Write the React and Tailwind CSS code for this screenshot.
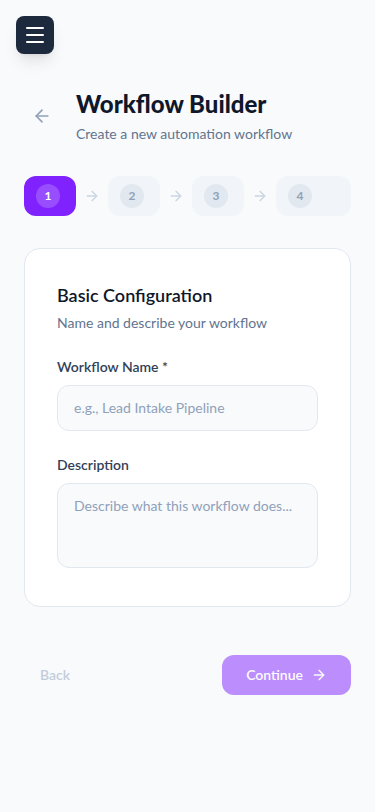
import React from 'react';
import { Menu, ArrowLeft, ArrowRight } from 'lucide-react';

const steps = [1, 2, 3, 4];

const App = () => {
  return (
    <div className="min-h-screen bg-slate-50 font-['Lato',sans-serif]">
      {/* menu toggle */}
      <button className="fixed top-4 left-4 z-10 flex h-[38px] w-[38px] items-center justify-center rounded-lg bg-slate-800 text-white shadow-lg">
        <Menu className="h-6 w-6" strokeWidth={2} />
      </button>

      <div className="px-6 pt-[88px] pb-12">
        {/* header */}
        <div className="flex items-center gap-4">
          <button className="p-2 text-slate-400">
            <ArrowLeft className="h-5 w-5" />
          </button>
          <div>
            <h1 className="text-2xl font-black leading-8 text-slate-900">Workflow Builder</h1>
            <p className="mt-1 text-sm text-slate-500">Create a new automation workflow</p>
          </div>
        </div>

        {/* steps */}
        <div className="mt-8 flex items-center gap-2">
          {steps.map((n, i) => (
            <React.Fragment key={n}>
              <div
                className={`flex h-10 items-center rounded-xl px-3 ${
                  i === 3 ? 'flex-1' : 'w-[52px]'
                } ${n === 1 ? 'bg-violet-600' : 'bg-slate-100'}`}
              >
                <span
                  className={`flex h-6 w-6 items-center justify-center rounded-full text-xs font-bold ${
                    n === 1 ? 'bg-white/20 text-white' : 'bg-slate-200 text-slate-400'
                  }`}
                >
                  {n}
                </span>
              </div>
              {i < 3 && <ArrowRight className="h-4 w-4 shrink-0 text-slate-300" />}
            </React.Fragment>
          ))}
        </div>

        {/* form card */}
        <div className="mt-8 rounded-2xl border border-slate-200 bg-white px-8 pt-8 pb-[38px]">
          <h2 className="text-lg font-semibold text-slate-900">Basic Configuration</h2>
          <p className="mt-1 text-sm text-slate-500">Name and describe your workflow</p>

          <div className="mt-6">
            <label className="mb-2 block text-sm font-semibold text-slate-700">Workflow Name *</label>
            <input
              type="text"
              placeholder="e.g., Lead Intake Pipeline"
              className="block w-full rounded-xl border border-slate-200 bg-slate-50 px-4 py-3 text-sm text-slate-900 placeholder:text-slate-400 outline-none"
            />
          </div>

          <div className="mt-6">
            <label className="mb-2 block text-sm font-semibold text-slate-700">Description</label>
            <textarea
              rows={3}
              placeholder="Describe what this workflow does..."
              className="block h-[85px] w-full resize-none rounded-xl border border-slate-200 bg-slate-50 px-4 py-3 text-sm text-slate-900 placeholder:text-slate-400 outline-none"
            />
          </div>
        </div>

        {/* footer actions */}
        <div className="mt-12 flex items-center justify-between">
          <button disabled className="px-4 py-2 text-sm font-semibold text-slate-400 opacity-50">
            Back
          </button>
          <button
            disabled
            className="flex h-10 items-center gap-2 rounded-xl bg-violet-600 px-6 text-sm font-semibold text-white opacity-50"
          >
            Continue
            <ArrowRight className="h-4 w-4" />
          </button>
        </div>
      </div>
    </div>
  );
};

export default App;
